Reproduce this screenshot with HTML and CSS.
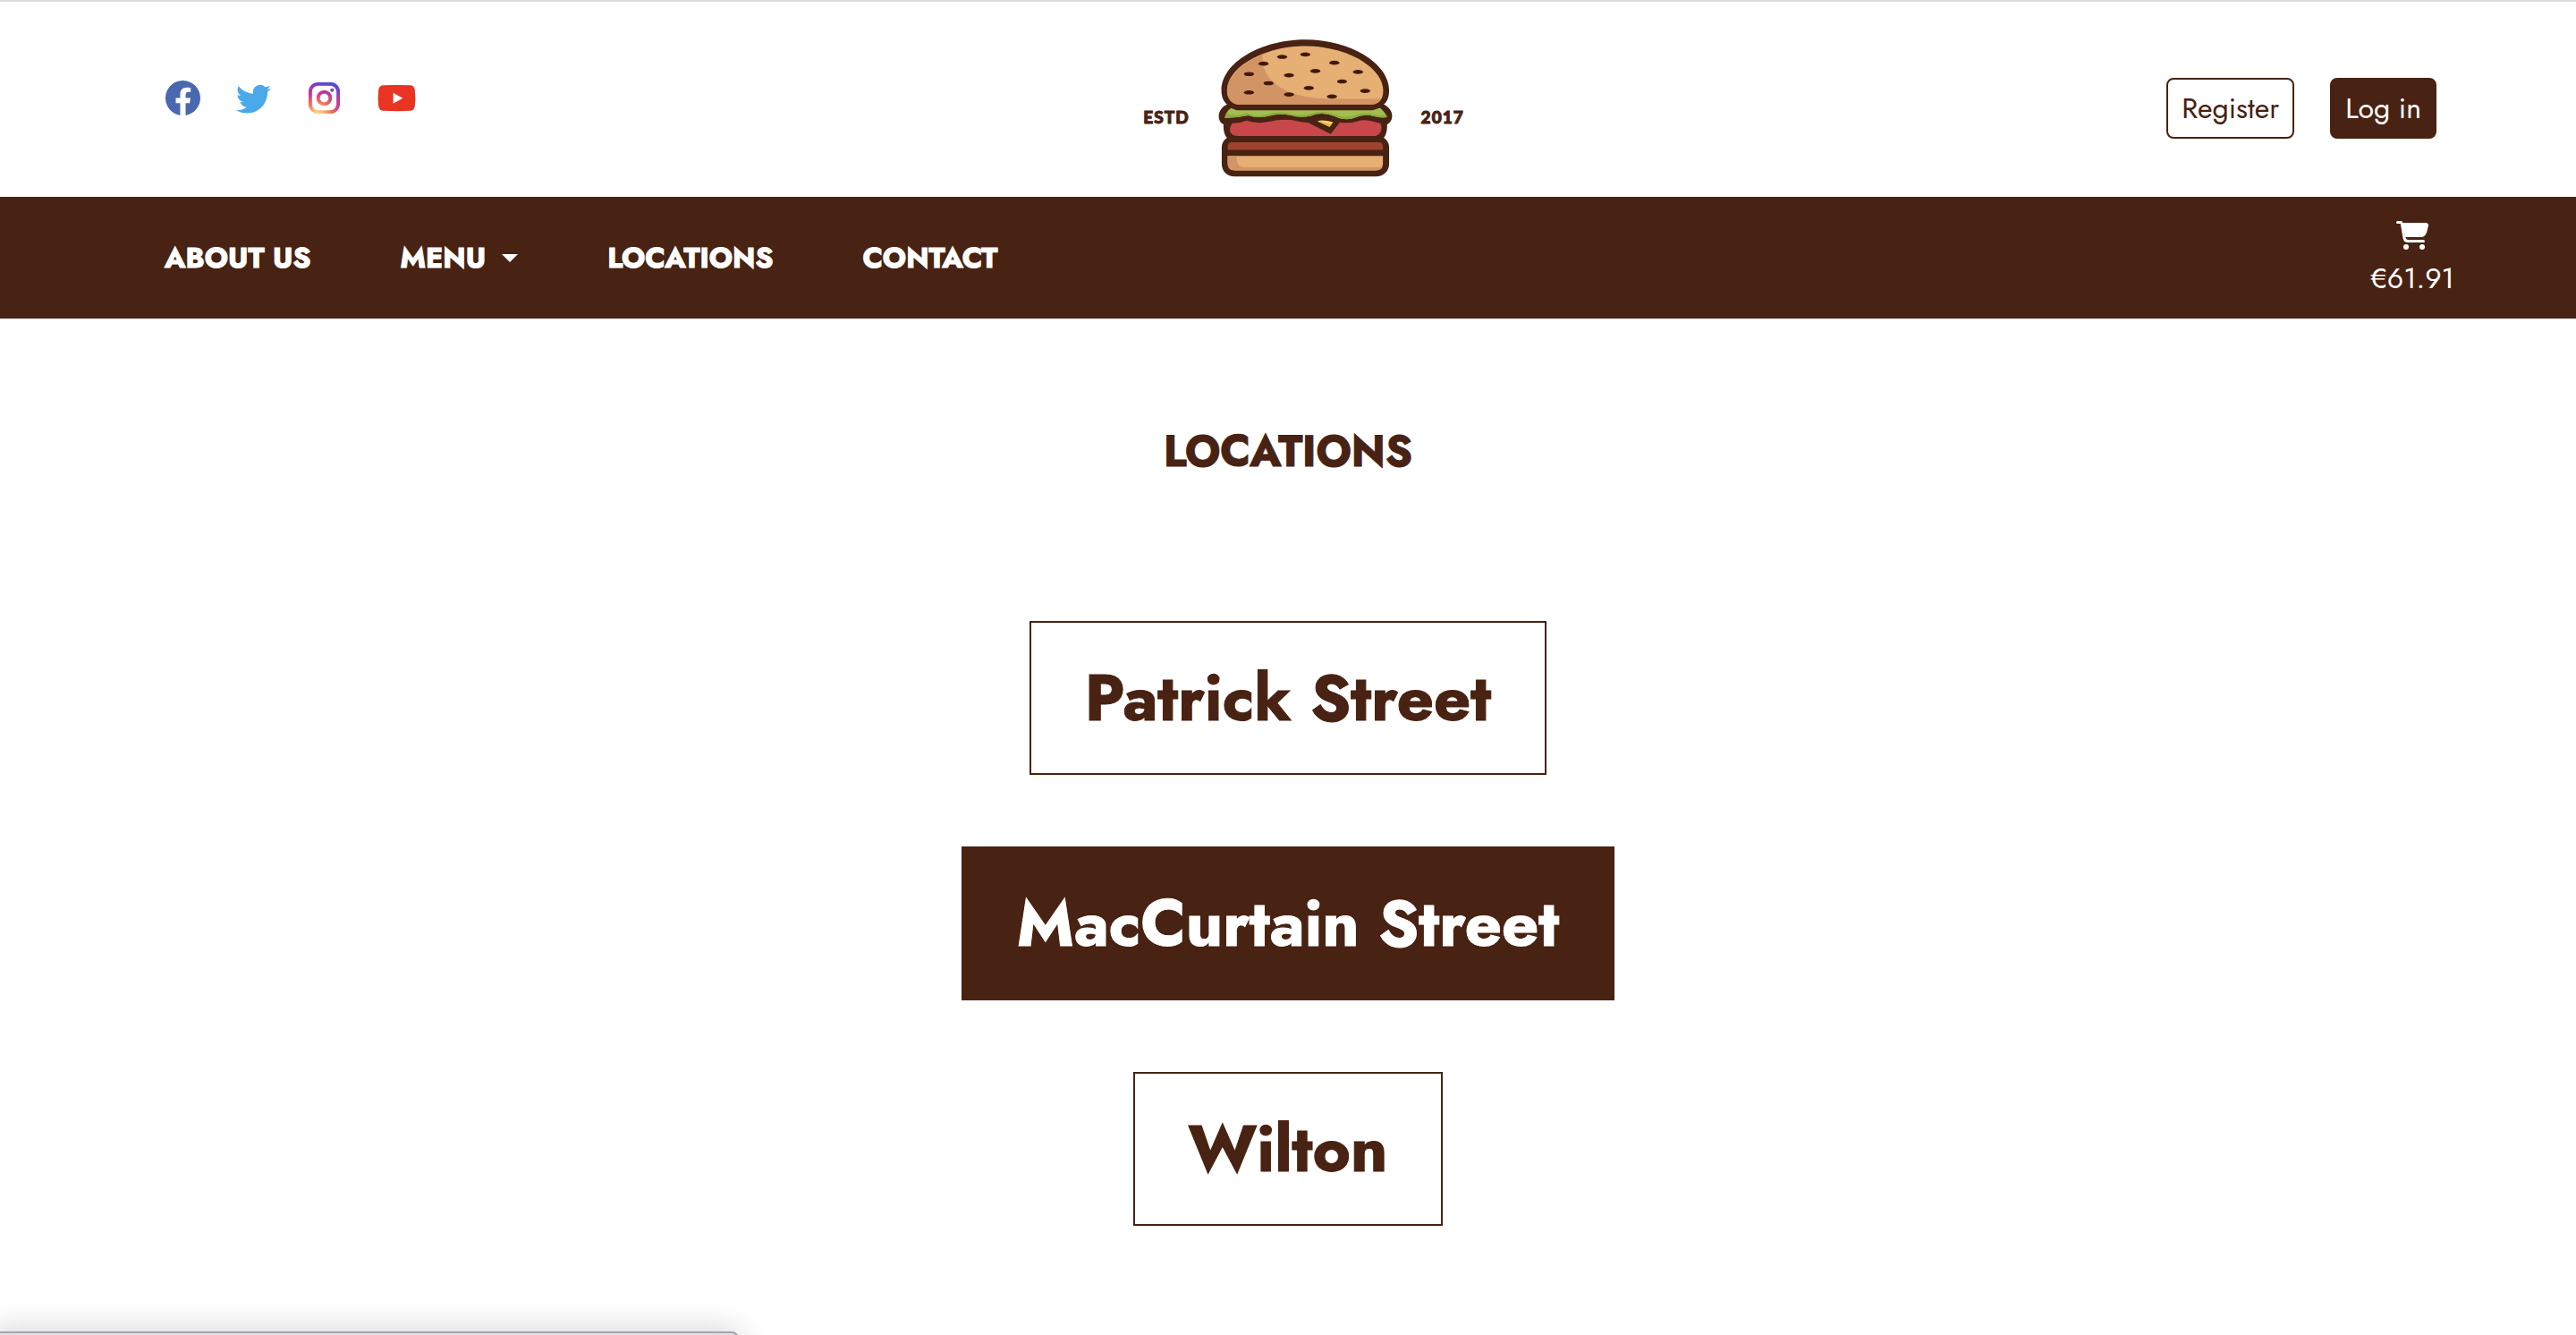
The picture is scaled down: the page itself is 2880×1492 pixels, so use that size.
FILE: index.html
```html
<!DOCTYPE html>
<html lang="en">
<head>
<meta charset="utf-8">
<meta name="viewport" content="width=device-width, initial-scale=1">
<title>Locations</title>
<link rel="stylesheet" href="styles.css">
</head>
<body>
<header class="header">
  <div class="social">
    <a href="#facebook" aria-label="Facebook">
      <svg class="social-icon" viewBox="0 0 16 16" fill="#4968ad"><path d="M16 8.049c0-4.446-3.582-8.05-8-8.05C3.58 0-.002 3.603-.002 8.05c0 4.017 2.926 7.347 6.75 7.951v-5.625h-2.03V8.05H6.75V6.275c0-2.017 1.195-3.131 3.022-3.131.876 0 1.791.157 1.791.157v1.98h-1.009c-.993 0-1.303.621-1.303 1.258v1.51h2.218l-.354 2.326H9.25V16c3.824-.604 6.75-3.934 6.75-7.951z"/></svg>
    </a>
    <a href="#twitter" aria-label="Twitter">
      <svg class="social-icon" viewBox="0 0 16 16" fill="#4aa9e9"><path d="M5.026 15c6.038 0 9.341-5.003 9.341-9.334 0-.14 0-.282-.006-.422A6.685 6.685 0 0 0 16 3.542a6.658 6.658 0 0 1-1.889.518 3.301 3.301 0 0 0 1.447-1.817 6.533 6.533 0 0 1-2.087.793A3.286 3.286 0 0 0 7.875 6.03a9.325 9.325 0 0 1-6.767-3.429 3.289 3.289 0 0 0 1.018 4.382A3.323 3.323 0 0 1 .64 6.575v.045a3.288 3.288 0 0 0 2.632 3.218 3.203 3.203 0 0 1-.865.115 3.23 3.23 0 0 1-.614-.057 3.283 3.283 0 0 0 3.067 2.277A6.588 6.588 0 0 1 .78 13.58a6.32 6.32 0 0 1-.78-.045A9.344 9.344 0 0 0 5.026 15z"/></svg>
    </a>
    <a href="#instagram" aria-label="Instagram">
      <svg class="social-icon" viewBox="0 0 40 40" fill="none">
        <defs>
          <radialGradient id="ig-warm" cx="13" cy="40" r="40" gradientUnits="userSpaceOnUse">
            <stop offset="0" stop-color="#fedc86"/><stop offset=".12" stop-color="#fccb80"/><stop offset=".42" stop-color="#f06a58"/><stop offset=".66" stop-color="#c8359a"/><stop offset="1" stop-color="#8a3fc0"/>
          </radialGradient>
          <linearGradient id="ig-cool" x1="19" y1="15" x2="23" y2="0" gradientUnits="userSpaceOnUse">
            <stop offset="0" stop-color="#4a50d8" stop-opacity="0"/><stop offset="1" stop-color="#4a50d8"/>
          </linearGradient>
          <g id="ig-shape" stroke-width="4"><rect x="4" y="4" width="32" height="32" rx="9"/><circle cx="20" cy="20" r="7"/><circle cx="29" cy="11" r="1" stroke-width="2"/></g>
        </defs>
        <use href="#ig-shape" stroke="url(#ig-warm)"/>
        <use href="#ig-shape" stroke="url(#ig-cool)"/>
      </svg>
    </a>
    <a href="#youtube" aria-label="YouTube">
      <svg class="social-icon wide" viewBox="0 0 44 40"><path fill="#e93323" d="M6 5.500Q22 4.500 38 5.500Q42 6 42.800 10.500Q44 20 42.800 29.500Q42 34 38 34.500Q22 35.500 6 34.500Q2 34 1.200 29.500Q0 20 1.200 10.500Q2 6 6 5.500Z"/><path fill="#fff" d="M18 14v12.500l11-6.200z"/></svg>
    </a>
  </div>
  <a class="logo" href="#home" aria-label="Home">
    <span class="logo-text">ESTD</span>
    <svg class="burger" viewBox="300 36 597 477">
      <g fill="#482212">
        <path d="M315 215C315 120 450 43 598 43S881 120 881 215C881 240 872 255 863 262C880 270 892 285 891 302C890 318 882 325 874 329C875 350 870 366 863 374C874 382 881 392 881 405V462C881 488 862 505 836 505H360C334 505 316 488 316 462V405C316 392 323 382 334 374C325 366 321 348 322 329C312 325 306 315 306 302C306 285 318 268 334 262C323 252 315 238 315 215Z"/>
      </g>
      <path fill="#e6af73" d="M334 215C334 135 460 65 598 65S861 135 861 215C861 245 846 262 820 262H375C348 262 334 240 334 215Z"/>
      <path fill="#d29465" d="M334 215C334 170 385 120 455 92C448 130 465 165 498 193C545 230 610 243 700 243H853C846 256 836 262 820 262H375C348 262 334 240 334 215Z"/>
      <path fill="#a2bd50" d="M348 274L366 281H826L850 273Q868 288 874 305Q855 309 830 302Q800 292 770 305Q735 320 695 301Q655 285 617 300Q580 308 550 299Q510 290 475 301Q435 310 405 299Q365 308 326 307Q330 285 348 274Z"/>
      <path fill="#8eaa40" d="M326 307Q329 296 335 290Q360 306 399 290Q435 306 465 296Q510 282 550 294Q590 302 620 292Q655 280 695 295Q735 312 770 297Q800 286 830 296Q850 303 871 295L874 305Q855 309 830 302Q800 292 770 305Q735 320 695 301Q655 285 617 300Q580 308 550 299Q510 290 475 301Q435 310 405 299Q365 308 326 307Z"/>
      <path fill="#c8474a" d="M352 325Q375 326 400 316Q435 328 475 320Q530 306 580 320Q595 323 607 323L684 361L714 322Q750 328 785 315Q810 312 852 326C860 345 852 368 828 368H372C344 368 335 348 352 325Z"/>
      <path fill="#fbd65c" d="M639 318Q655 311 692 321L680 337Z"/>
      <path fill="#e3b944" d="M639 318Q658 319 686 329L680 337Z"/>
      <path fill="#9e432f" d="M336 415V403Q337 389 351 389H846Q860 389 860 403V415Z"/>
      <path fill="#e6af73" d="M336 435H860V463Q858 484 836 484H360Q338 484 336 463Z"/>
      <path fill="#d29465" d="M336 435H367V450Q370 474 394 474H858Q852 484 836 484H360Q338 484 336 463Z"/>
      <g fill="#40190c">
        <ellipse cx="520" cy="101" rx="17" ry="7"/><ellipse cx="598" cy="93" rx="17" ry="7"/><ellipse cx="457" cy="124" rx="17" ry="7"/><ellipse cx="696" cy="121" rx="17" ry="7"/><ellipse cx="408" cy="159" rx="17" ry="7"/><ellipse cx="543" cy="163" rx="17" ry="7"/><ellipse cx="632" cy="149" rx="17" ry="7"/><ellipse cx="776" cy="152" rx="17" ry="7"/><ellipse cx="474" cy="190" rx="17" ry="7"/><ellipse cx="722" cy="184" rx="17" ry="7"/><ellipse cx="408" cy="221" rx="17" ry="7"/><ellipse cx="543" cy="228" rx="17" ry="7"/><ellipse cx="610" cy="206" rx="17" ry="7"/><ellipse cx="688" cy="235" rx="17" ry="7"/><ellipse cx="800" cy="216" rx="17" ry="7"/>
      </g>
    </svg>
    <span class="logo-text">2017</span>
  </a>
  <div class="account">
    <button class="btn" type="button">Register</button>
    <button class="btn btn-solid" type="button">Log in</button>
  </div>
</header>
<nav class="nav">
  <ul class="nav-list">
    <li><a href="#about">ABOUT US</a></li>
    <li><a class="dropdown" href="#menu">MENU</a></li>
    <li><a href="#locations">LOCATIONS</a></li>
    <li><a href="#contact">CONTACT</a></li>
  </ul>
  <a class="cart" href="#cart">
    <svg class="cart-icon" viewBox="0 0 36 32" aria-hidden="true"><g fill="#fff"><path d="M5 2H33Q36 2 36 5L34 13Q32 18 28 18H10V15L6 5Z"/><circle cx="11" cy="29" r="3"/><circle cx="29" cy="29" r="3"/></g><path fill="none" stroke="#fff" stroke-width="3" stroke-linecap="round" stroke-linejoin="round" d="M1.500 1.500H5.500L6.500 4L9 19Q10 22.500 13 22.500H30.500"/></svg>
    <span>€61.91</span>
  </a>
</nav>
<main class="main">
  <h1 class="title">LOCATIONS</h1>
  <div class="places">
    <a class="place" href="#patrick-street">Patrick Street</a>
    <a class="place active" href="#maccurtain-street">MacCurtain Street</a>
    <a class="place" href="#wilton">Wilton</a>
  </div>
</main>
<div class="status" aria-hidden="true"></div>
</body>
</html>
```
FILE: styles.css
```css
* {
  box-sizing: border-box;
}

body {
  margin: 0;
  color: #482212;
  background: #fff;
  border-top: 2px solid #dcdcdc;
  font-family: Jost, Lato, sans-serif;
  font-size: 32px;
  line-height: 48px;
}

a {
  color: inherit;
  text-decoration: none;
}

.header {
  display: grid;
  grid-template-columns: 1fr auto 1fr;
  align-items: center;
  padding: 40px 150px 20px 185px;
}

.social {
  display: flex;
  gap: 40px;
  padding-bottom: 24px;
}

.social a {
  display: flex;
}

.social-icon {
  width: 39px;
  height: 39px;
}

.social-icon.wide {
  width: 43px;
}

.logo {
  display: flex;
  align-items: center;
  gap: 30px;
}

.logo-text {
  padding-top: 20px;
  font-family: Lato, sans-serif;
  font-size: 19px;
  font-weight: 900;
  line-height: 24px;
  letter-spacing: 1px;
  -webkit-text-stroke: 1px currentColor;
}

.burger {
  width: 199px;
  height: 158px;
}

.account {
  display: flex;
  justify-content: flex-end;
  gap: 40px;
  padding-right: 6px;
}

.btn {
  padding: 8px 15px;
  border: 2px solid #482212;
  border-radius: 8px;
  color: #482212;
  background: #fff;
  font: inherit;
}

.btn-solid {
  color: #fff;
  background: #482212;
}

.nav {
  display: flex;
  align-items: center;
  justify-content: space-between;
  padding: 21px 136px 21px 184px;
  color: #fff;
  background: #482212;
}

.nav-list {
  display: flex;
  gap: 100px;
  margin: 0;
  padding: 0;
  list-style: none;
  font-weight: 700;
  -webkit-text-stroke: 1px currentColor;
}

.dropdown {
  display: flex;
  align-items: center;
  gap: 18px;
}

.dropdown::after {
  content: "";
  border: 9px solid transparent;
  border-top-color: #fff;
  border-bottom: 0;
}

.cart {
  display: flex;
  flex-direction: column;
  align-items: center;
  gap: 8px;
  padding-top: 6px;
}

.cart-icon {
  width: 36px;
  height: 32px;
}

.main {
  padding: 113px 40px;
}

.title {
  margin: 0 0 153px;
  font-size: 48px;
  line-height: 72px;
  text-align: center;
  -webkit-text-stroke: 1px currentColor;
}

.places {
  display: flex;
  flex-direction: column;
  align-items: center;
  gap: 80px;
}

.place {
  padding: 30px 60px;
  border: 2px solid #482212;
  font-size: 72px;
  font-weight: 700;
  line-height: 108px;
  -webkit-text-stroke: 1px currentColor;
}

.place.active {
  color: #fff;
  background: #482212;
}

.status {
  position: fixed;
  left: -12px;
  bottom: -36px;
  width: 838px;
  height: 40px;
  border: 2px solid #a6a6a6;
  border-radius: 8px;
  background: #e2e2e4;
  box-shadow: 0 0 36px rgba(0, 0, 0, 0.2);
}
```
